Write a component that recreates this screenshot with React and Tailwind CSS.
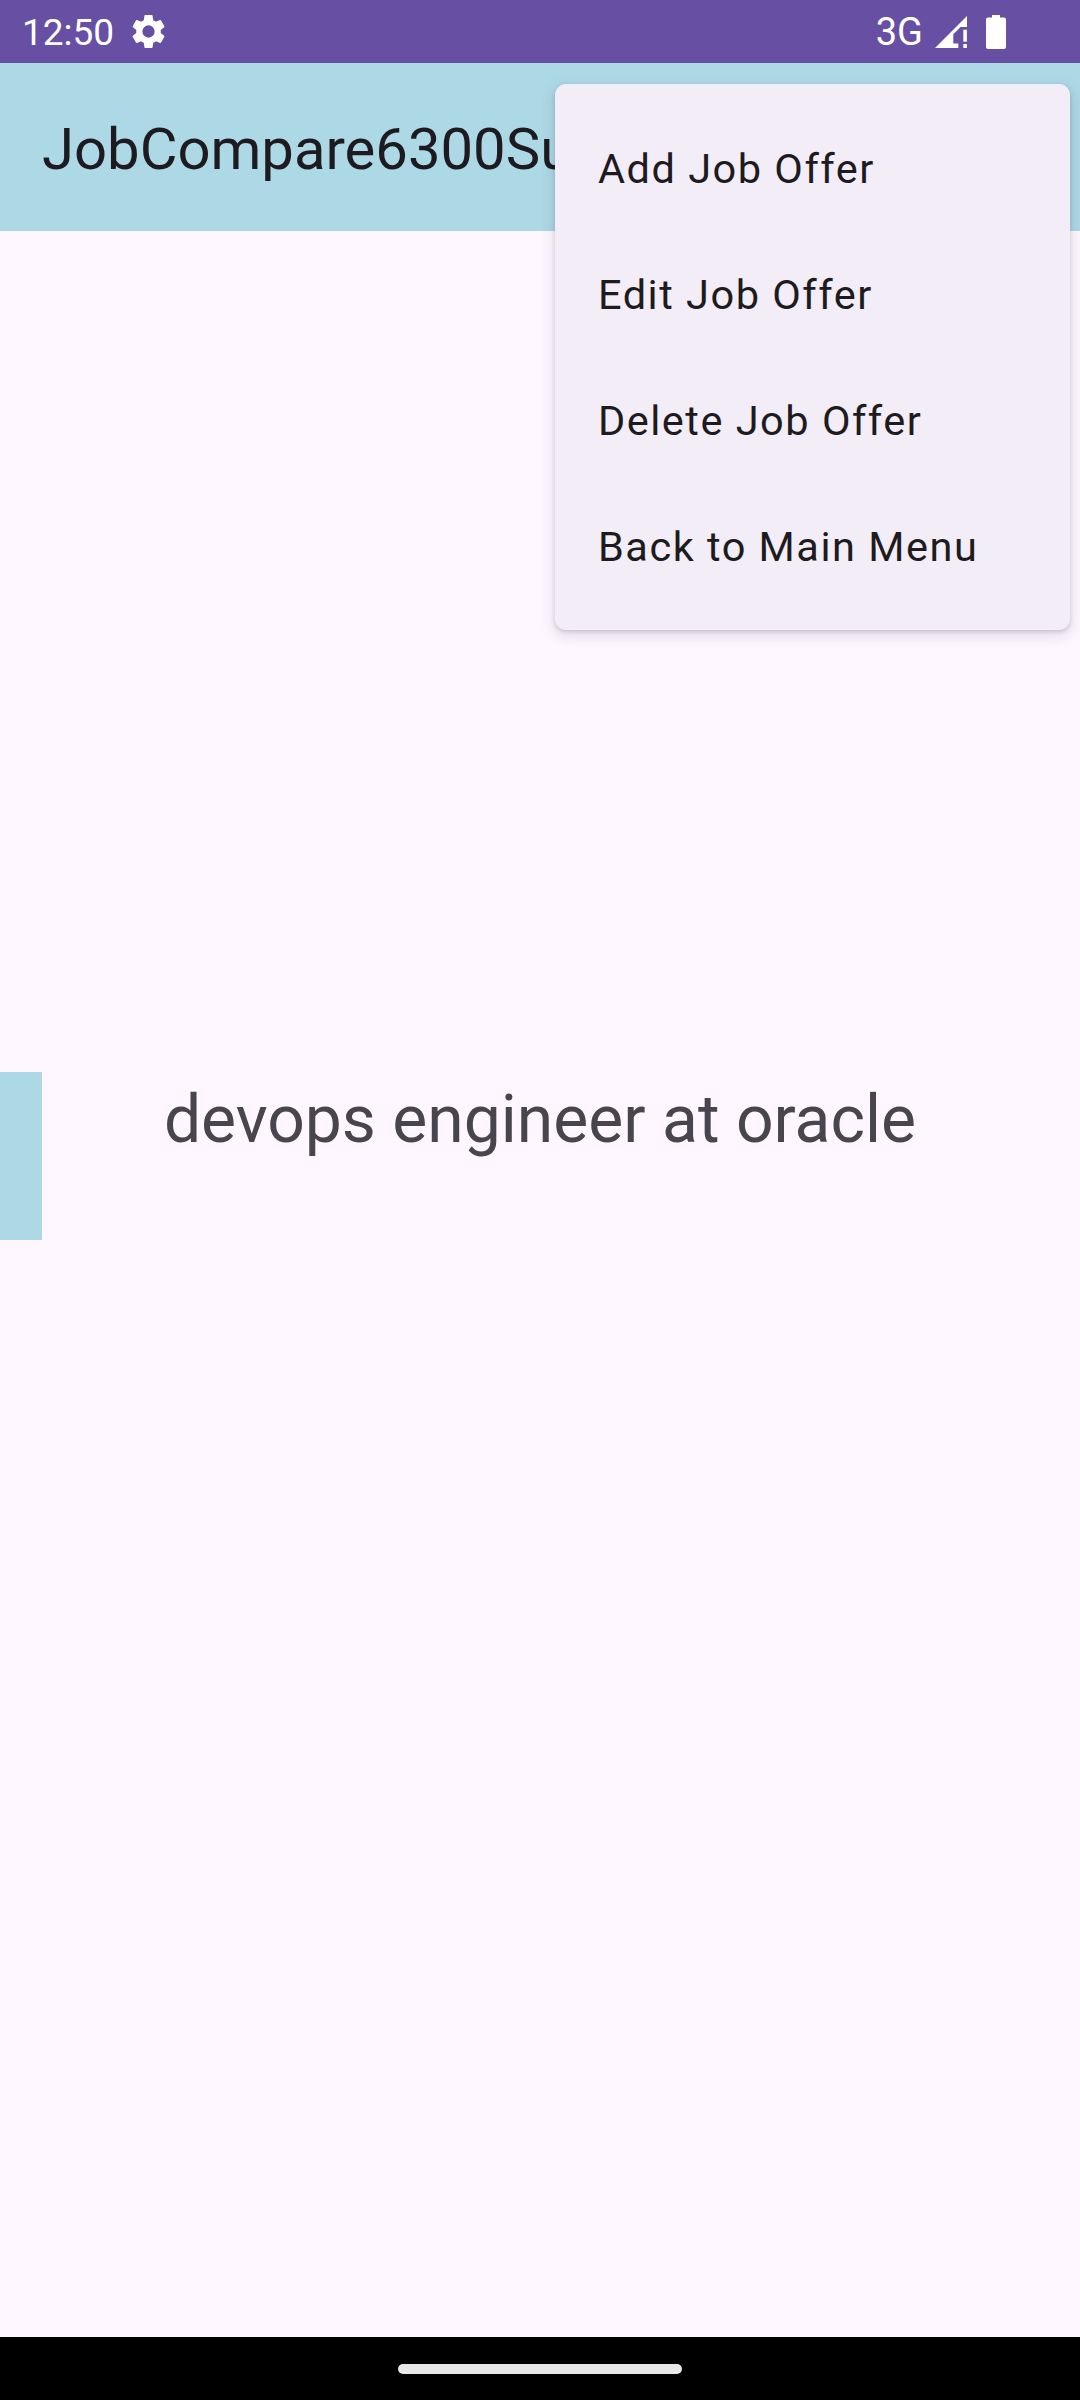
const roboto = { fontFamily: "Roboto, sans-serif" };

function Gear() {
  return (
    <svg viewBox="0 0 24 24" className="w-[41px] h-[41px] ml-[14px] shrink-0" fill="#ffffff">
      <path d="M19.14 12.94c.04-.3.06-.61.06-.94 0-.32-.02-.64-.07-.94l2.03-1.58a.49.49 0 0 0 .12-.61l-1.92-3.32a.49.49 0 0 0-.59-.22l-2.39.96c-.5-.38-1.03-.7-1.62-.94l-.36-2.54a.48.48 0 0 0-.48-.41h-3.84a.48.48 0 0 0-.47.41l-.36 2.54c-.59.24-1.13.57-1.62.94l-2.39-.96a.48.48 0 0 0-.59.22L2.74 8.87a.48.48 0 0 0 .12.61l2.03 1.58c-.05.3-.09.63-.09.94s.02.64.07.94l-2.03 1.58a.49.49 0 0 0-.12.61l1.92 3.32c.12.22.37.29.59.22l2.39-.96c.5.38 1.03.7 1.62.94l.36 2.54c.05.24.24.41.48.41h3.84c.24 0 .44-.17.47-.41l.36-2.54c.59-.24 1.13-.56 1.62-.94l2.39.96c.22.08.47 0 .59-.22l1.92-3.32a.48.48 0 0 0-.12-.61l-2.01-1.58zM12 15.6A3.6 3.6 0 1 1 12 8.4a3.6 3.6 0 0 1 0 7.2z" />
    </svg>
  );
}

function Signal() {
  return (
    <svg viewBox="0 0 34 34" className="w-[34px] h-[34px] ml-[11px] shrink-0" fill="#ffffff">
      <path d="M1 33 L33 1 V12 H26.5 L19.3 19.3 V28.5 H24.3 V33 Z" />
      <rect x="29.3" y="14.7" width="3.6" height="12" />
      <rect x="29.3" y="29" width="3.6" height="4" />
    </svg>
  );
}

function Battery() {
  return (
    <svg viewBox="0 0 20 34" className="w-[20px] h-[34px] ml-[18px] shrink-0" fill="#ffffff">
      <path d="M6 0 H14 V2.5 H18 A2 2 0 0 1 20 4.5 V32 A2 2 0 0 1 18 34 H2 A2 2 0 0 1 0 32 V4.5 A2 2 0 0 1 2 2.5 H6 Z" />
    </svg>
  );
}

const items = ["Add Job Offer", "Edit Job Offer", "Delete Job Offer", "Back to Main Menu"];

export default function App() {
  return (
    <div className="relative flex flex-col w-[1080px] h-[2400px] overflow-hidden bg-[#fef7ff]" style={roboto}>
      <div className="flex items-center h-[63px] bg-[#674fa3] text-white pl-[22px] pr-[74px]">
        <span className="text-[37px] leading-[63px] pt-[1px]">12:50</span>
        <Gear />
        <span className="ml-auto text-[38px] leading-[63px] pt-[1px]">3G</span>
        <Signal />
        <Battery />
      </div>
      <div className="flex items-center h-[168px] bg-[#add8e6] pl-[42px] pt-[3px]">
        <span className="text-[58px] leading-[80px] text-[#1d1b20] whitespace-nowrap">JobCompare6300Su</span>
      </div>
      <div className="flex-1">
        <div className="grid grid-cols-[42px_1fr_42px] mt-[841px] h-[168px]">
          <div className="bg-[#add8e6]" />
          <p className="text-center text-[66px] leading-[88px] pt-[4px] text-[#49454f] whitespace-nowrap">devops engineer at oracle</p>
          <div />
        </div>
      </div>
      <div className="flex items-center justify-center h-[63px] bg-black">
        <div className="w-[284px] h-[10px] rounded-full bg-[#e8e8e8]" />
      </div>
      <div className="absolute left-[555px] top-[84px] w-[515px] py-[21px] rounded-[11px] bg-[#f3edf7] shadow-[0_5px_14px_3px_rgba(0,0,0,0.09),0_2px_4px_rgba(0,0,0,0.14)]">
        {items.map((t) => (
          <div key={t} className="flex items-center h-[126px] pl-[43px] pt-[3px] text-[41.5px] tracking-[1.5px] text-[#1d1b20] whitespace-nowrap">
            {t}
          </div>
        ))}
      </div>
    </div>
  );
}
